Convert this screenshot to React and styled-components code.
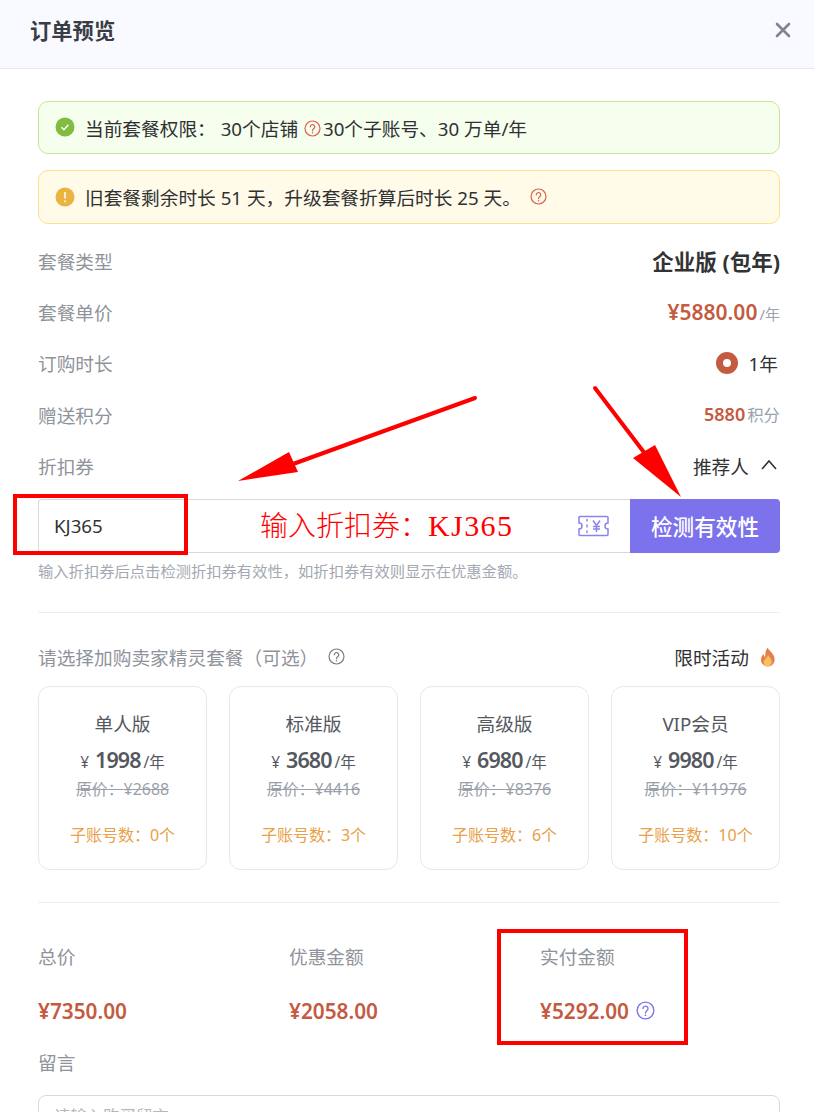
import React from 'react';
import styled, { createGlobalStyle } from 'styled-components';

const Global = createGlobalStyle`
  html, body { margin: 0; padding: 0; background: #fff; overflow: hidden; }
  * { box-sizing: border-box; }
`;
const Page = styled.div`
  position: relative; width: 814px; height: 1112px; overflow: hidden; background: #fff;
  font-family: "Noto Sans", "Noto Sans CJK SC", sans-serif; color: #333;
`;
const Header = styled.header`
  height: 69px; background: #f9faff; border-bottom: 1px solid #e7e9f1;
  display: flex; align-items: center; justify-content: space-between; padding: 0 22px 6px 30px;
`;
const Title = styled.h1`margin: 0; font-size: 21.3px; font-weight: 700; color: #3a3d44; line-height: 28px;`;
const Close = styled.svg`width: 18px; height: 18px; color: #7d8794; margin-top: -2px;`;
const Body = styled.main`padding: 32px 34px 0 38px;`;
const Alert = styled.div`
  display: flex; align-items: center; height: ${p => p.$h}px; margin-bottom: 16px; padding: 0 0 1px 16px;
  border: 1px solid ${p => p.$border}; background: ${p => p.$bg}; border-radius: 10px;
  font-size: 18.7px; color: #303133; white-space: pre;
`;
const AlertIcon = styled.svg`width: 20px; height: 20px; margin-right: 10px; flex: none;`;
const Help = styled.svg`width: ${p => p.$s || 17}px; height: ${p => p.$s || 17}px; flex: none; color: ${p => p.$c}; margin: ${p => p.$m || 0};`;
const Rows = styled.div`margin-top: -5px;`;
const Row = styled.div`display: flex; align-items: center; justify-content: space-between; height: 51.2px;`;
const Label = styled.span`color: #8f939b; font-size: 18.7px;`;
const Strong = styled.span`font-size: 21.5px; font-weight: 700; color: #333;`;
const Price = styled.span`font-size: 21px; font-weight: 600; color: #c45a40;`;
const Points = styled.span`font-size: 18px; font-weight: 600; color: #c45a40;`;
const Unit = styled.span`font-size: ${p => p.$s}px; color: #9aa2ae; margin-left: 2px;`;
const Radio = styled.span`
  width: 22px; height: 22px; border-radius: 50%; border: 7px solid #c45a40; background: #fff; margin-right: 11px;
`;
const Right = styled.span`display: flex; align-items: center; color: #303133; font-size: 18.7px; padding-right: 2px;`;
const Chevron = styled.svg`width: 18px; height: 18px; margin-left: 11px; color: #333;`;
const InputRow = styled.div`display: flex; height: 54px; margin-top: 8px;`;
const InputBox = styled.div`
  flex: 1; display: flex; align-items: center; justify-content: space-between; padding: 0 20px 0 15px;
  border: 1px solid #d8d9dd; border-right: 0; border-radius: 4px 0 0 4px; font-size: 18.7px; color: #333;
`;
const Ticket = styled.svg`width: 33px; height: 24px; color: #8a82ee;`;
const CheckBtn = styled.button`
  width: 150px; border: 0; border-radius: 0 4px 4px 0; background: #7b72ec; color: #fff;
  font: 500 21.6px "Noto Sans", "Noto Sans CJK SC", sans-serif; padding: 0;
`;
const Hint = styled.p`margin: 8px 0 0; font-size: 15.3px; line-height: 20px; color: #a3a8b2;`;
const Divider = styled.hr`margin: ${p => p.$m}; border: 0; border-top: 1px solid #eceef0;`;
const Section = styled.div`display: flex; align-items: center; justify-content: space-between; margin-top: 30px; height: 28px;`;
const SectionTitle = styled.span`display: flex; align-items: center; color: #8f939b; font-size: 18.7px;`;
const Promo = styled.span`display: flex; align-items: center; font-size: 18.7px; color: #303133;`;
const Flame = styled.svg`width: 16px; height: 20px; margin-left: 11px; margin-right: 4px;`;
const Cards = styled.div`display: grid; grid-template-columns: repeat(4, 169px); gap: 22px; margin-top: 15px;`;
const Card = styled.div`
  height: 184px; border: 1px solid #e7e8ea; border-radius: 12px; text-align: center; padding-top: 24px;
`;
const CardName = styled.div`font-size: 18.7px; line-height: 26px; color: #55585f;`;
const CardPrice = styled.div`display: flex; align-items: baseline; justify-content: center; margin-top: 8px; color: #55585f; height: 28px; font-size: 15.5px;`;
const Amount = styled.span`font-size: 21.5px; font-weight: 600; letter-spacing: -0.9px; margin: 0 3px 0 6px;`;
const Origin = styled.div`font-size: 15.9px; line-height: 20px; color: #9aa0aa; text-decoration: line-through; margin-top: 6px;`;
const Accounts = styled.div`font-size: 16px; line-height: 22px; color: #e9a046; margin-top: 25px;`;
const Totals = styled.div`display: grid; grid-template-columns: repeat(3, 251px);`;
const TotalLabel = styled.div`font-size: 18.7px; line-height: 26px; color: #8f939b;`;
const TotalValue = styled.div`display: flex; align-items: center; font-size: 20.8px; font-weight: 600; line-height: 28px; color: #c45a40; margin-top: 27px;`;
const Note = styled.div`margin-top: 25px; font-size: 18.7px; line-height: 26px; color: #8f939b;`;
const Area = styled.div`
  margin-top: 19px; height: 90px; border: 1px solid #d8d9dd; border-radius: 8px; padding: 8px 15px;
  font-size: 16.4px; line-height: 24px; color: #b3b7bf;
`;
const Overlay = styled.svg`position: absolute; inset: 0; width: 814px; height: 1112px; pointer-events: none;`;
const MarkBox = styled.div`
  position: absolute; left: ${p => p.$x}px; top: ${p => p.$y}px; width: ${p => p.$w}px; height: ${p => p.$h}px;
  border: 4px solid #f00; pointer-events: none;
`;
const Caption = styled.div`
  position: absolute; left: 260px; top: 506px; font-family: "Liberation Serif", "Noto Sans CJK SC", serif; font-size: 28px; line-height: 40px; color: #f00; font-weight: 300; white-space: pre;
`;
const CaptionCode = styled.span`font-size: 30px; font-weight: 400; letter-spacing: 1.4px;`;

const QIcon = ({ c, s, m }) => (
  <Help $c={c} $s={s} $m={m} viewBox="0 0 20 20" fill="none" stroke="currentColor" strokeWidth="1.4">
    <circle cx="10" cy="10" r="8.8" />
    <path d="M7.4 8a2.6 2.6 0 1 1 4.3 2c-1 .8-1.700 1.300-1.700 2.600" strokeLinecap="round" />
    <circle cx="10" cy="15" r=".9" fill="currentColor" stroke="none" />
  </Help>
);
const plans = [
  ['单人版', '1998', '¥2688', '0'],
  ['标准版', '3680', '¥4416', '3'],
  ['高级版', '6980', '¥8376', '6'],
  ['VIP会员', '9980', '¥11976', '10'],
];

export default function App() {
  return (
    <Page>
      <Global />
      <Header>
        <Title>订单预览</Title>
        <Close viewBox="0 0 18 18" fill="none" stroke="currentColor" strokeWidth="2.6" strokeLinecap="round">
          <path d="M3 3l12 12M15 3L3 15" />
        </Close>
      </Header>
      <Body>
        <Alert $h={53} $bg="#f6feee" $border="#c6e59b">
          <AlertIcon viewBox="0 0 20 20">
            <circle cx="10" cy="10" r="9.5" fill="#7fbc3f" />
            <path d="M6.500 10.200l2.400 2.500 4.500-5" fill="none" stroke="#fff" strokeWidth="1.4" />
          </AlertIcon>
          当前套餐权限： 30个店铺 <QIcon c="#d9634e" s={17} m="2px 2px 0 1px" />30个子账号、30 万单/年
        </Alert>
        <Alert $h={54} $bg="#fffbe8" $border="#fbe08f">
          <AlertIcon viewBox="0 0 20 20">
            <circle cx="10" cy="10" r="9.5" fill="#e9b43f" />
            <path d="M10 5v6.500M10 13.600v1.600" fill="none" stroke="#fff" strokeWidth="1.5" />
          </AlertIcon>
          旧套餐剩余时长 51 天，升级套餐折算后时长 25 天。 <QIcon c="#d9634e" s={17} m="0 0 0 4px" />
        </Alert>
        <Rows>
          <Row><Label>套餐类型</Label><Strong>企业版 (包年)</Strong></Row>
          <Row><Label>套餐单价</Label><span><Price>¥5880.00</Price><Unit $s={15}>/年</Unit></span></Row>
          <Row><Label>订购时长</Label><Right><Radio />1年</Right></Row>
          <Row><Label>赠送积分</Label><span><Points>5880</Points><Unit $s={16.4}>积分</Unit></span></Row>
          <Row>
            <Label>折扣券</Label>
            <Right>推荐人
              <Chevron viewBox="0 0 18 18" fill="none" stroke="currentColor" strokeWidth="1.6"><path d="M2 13l7-8 7 8" /></Chevron>
            </Right>
          </Row>
        </Rows>
        <InputRow>
          <InputBox>
            KJ365
            <Ticket viewBox="0 0 33 24" fill="none" stroke="currentColor" strokeWidth="1.5">
              <path d="M3 2.500h27a1 1 0 0 1 1 1v5.500a3 3 0 0 0 0 6v5.500a1 1 0 0 1-1 1H3a1 1 0 0 1-1-1V15a3 3 0 0 0 0-6V3.500a1 1 0 0 1 1-1z" />
              <path d="M10 5v2.500M10 10.500v3M10 16.500V19M16 6.500l3.500 5 3.500-5M19.500 11.500V18M16 12.500h7M16 15h7" />
            </Ticket>
          </InputBox>
          <CheckBtn>检测有效性</CheckBtn>
        </InputRow>
        <Hint>输入折扣券后点击检测折扣券有效性，如折扣券有效则显示在优惠金额。</Hint>
        <Divider $m="31px 0 0" />
        <Section>
          <SectionTitle>请选择加购卖家精灵套餐（可选）<QIcon c="#7a7d83" s={17} m="0 0 0 10px" /></SectionTitle>
          <Promo>限时活动
            <Flame viewBox="0 0 17 20">
              <path d="M8 0c1 3 7 6 7.500 12 .3 4.500-3 8-7 8s-7.500-3-7.500-7c0-3 1.500-5 3-6.500 0 2 .5 3 1.500 3.500C5.500 6 6 3 8 0z" fill="#e2814e" />
              <path d="M8.500 8c1 2 4 4 4 7 0 2.500-2 5-4.500 5s-4-2-4-4.500c0-3 3.500-4 4.500-7.500z" fill="#f8bf62" />
            </Flame>
          </Promo>
        </Section>
        <Cards>
          {plans.map(([name, price, origin, n]) => (
            <Card key={name}>
              <CardName>{name}</CardName>
              <CardPrice>¥<Amount>{price}</Amount>/年</CardPrice>
              <Origin>原价：{origin}</Origin>
              <Accounts>子账号数：{n}个</Accounts>
            </Card>
          ))}
        </Cards>
        <Divider $m="32px 0 41px" />
        <Totals>
          <div><TotalLabel>总价</TotalLabel><TotalValue>¥7350.00</TotalValue></div>
          <div><TotalLabel>优惠金额</TotalLabel><TotalValue>¥2058.00</TotalValue></div>
          <div><TotalLabel>实付金额</TotalLabel><TotalValue>¥5292.00<QIcon c="#7b72ec" s={19} m="0 0 0 7px" /></TotalValue></div>
        </Totals>
        <Note>留言</Note>
        <Area>请输入购买留言</Area>
      </Body>
      <Overlay viewBox="0 0 814 1112">
        <path d="M475 398L282 468" stroke="#f00" strokeWidth="4" strokeLinecap="round" />
        <path d="M238 481L289 452 298 472z" fill="#f00" />
        <path d="M595 388L646 455" stroke="#f00" strokeWidth="4" strokeLinecap="round" />
        <path d="M681 497L633 458 655 445z" fill="#f00" />
      </Overlay>
      <MarkBox $x={13} $y={494} $w={175} $h={61} />
      <MarkBox $x={497} $y={929} $w={191} $h={116} />
      <Caption>输入折扣券：<CaptionCode>KJ365</CaptionCode></Caption>
    </Page>
  );
}
